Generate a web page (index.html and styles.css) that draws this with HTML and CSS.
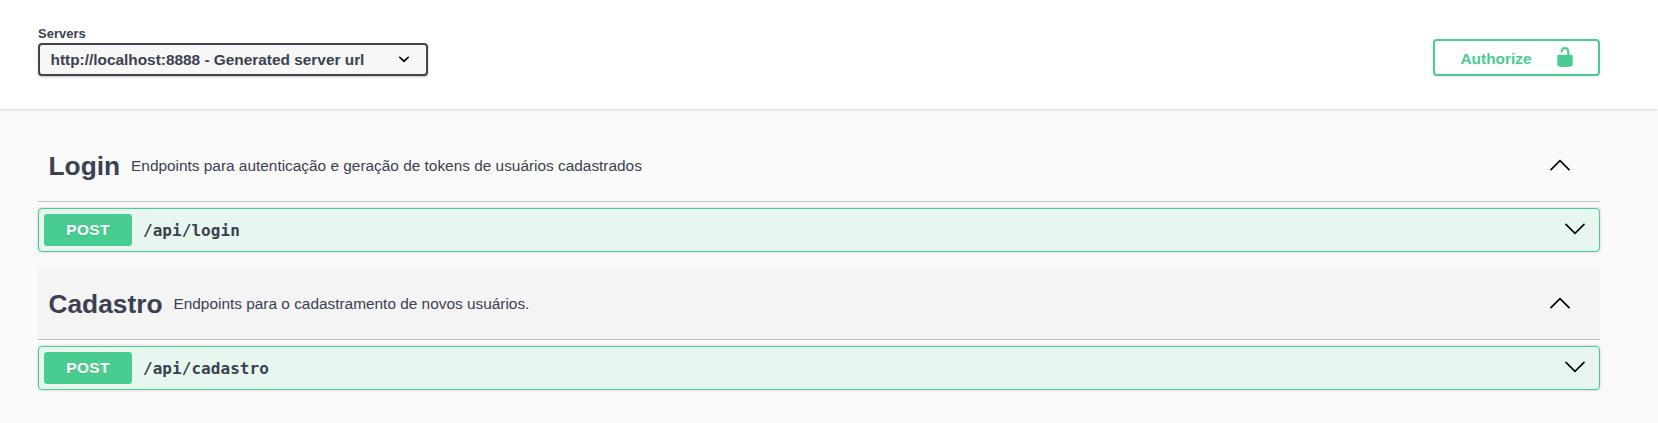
FILE: index.html
```html
<!DOCTYPE html>
<html lang="pt-BR">
<head>
<meta charset="utf-8">
<title>API</title>
<link rel="stylesheet" href="styles.css">
</head>
<body>
<header class="scheme">
  <div class="servers">
    <span class="servers-label">Servers</span>
    <div class="select" role="combobox" tabindex="0">
      <span class="select-value">http://localhost:8888 - Generated server url</span>
      <svg class="select-arrow" width="22" height="22" viewBox="0 0 20 20"><path d="M13.418 7.859a.695.695 0 0 1 .978 0 .68.68 0 0 1 0 .969l-3.908 3.83a.697.697 0 0 1-.979 0l-3.908-3.83a.68.68 0 0 1 0-.969.695.695 0 0 1 .978 0L10 11z"/></svg>
    </div>
  </div>
  <button class="authorize" type="button">
    <span class="authorize-text">Authorize</span>
    <svg class="lock" width="22" height="22" viewBox="0 0 20 20"><path d="M15.8 8H14V5.6C14 2.703 12.665 1 10 1 7.334 1 6 2.703 6 5.6V6h2v-.801C8 3.754 8.797 3 10 3c1.203 0 2 .754 2 2.199V8H4c-.553 0-1 .646-1 1.199V17c0 .549.428 1.139.951 1.307l1.197.387C5.672 18.861 6.55 19 7.1 19h5.8c.549 0 1.428-.139 1.951-.307l1.196-.387c.524-.167.953-.757.953-1.306V9.199C17 8.646 16.352 8 15.8 8z"/></svg>
  </button>
</header>
<main class="tags">
  <section class="tag">
    <div class="tag-head">
      <h3 class="tag-name">Login</h3>
      <p class="tag-desc">Endpoints para autenticação e geração de tokens de usuários cadastrados</p>
      <svg class="arrow" width="22" height="22" viewBox="0 0 20 20"><path d="M1.8 14.2 10 6l8.2 8.2"/></svg>
    </div>
    <div class="op">
      <span class="method">POST</span>
      <span class="path">/api/login</span>
      <svg class="arrow" width="22" height="22" viewBox="0 0 20 20"><path d="M1.8 5.8 10 14l8.2-8.2"/></svg>
    </div>
  </section>
  <section class="tag">
    <div class="tag-head hovered">
      <h3 class="tag-name">Cadastro</h3>
      <p class="tag-desc">Endpoints para o cadastramento de novos usuários.</p>
      <svg class="arrow" width="22" height="22" viewBox="0 0 20 20"><path d="M1.8 14.2 10 6l8.2 8.2"/></svg>
    </div>
    <div class="op">
      <span class="method">POST</span>
      <span class="path">/api/cadastro</span>
      <svg class="arrow" width="22" height="22" viewBox="0 0 20 20"><path d="M1.8 5.8 10 14l8.2-8.2"/></svg>
    </div>
  </section>
</main>
</body>
</html>
```
FILE: styles.css
```css
* { box-sizing: border-box; }
body {
  margin: 0;
  height: 423px;
  overflow: hidden;
  background: #fafafa;
  color: #3b4151;
  font-family: "Liberation Sans", Arial, sans-serif;
}
.scheme {
  display: flex;
  justify-content: space-between;
  align-items: flex-end;
  height: 109px;
  padding: 0 58px 33px 38px;
  background: #fff;
  box-shadow: 0 1px 2px rgba(0, 0, 0, .15);
}
.servers { display: flex; flex-direction: column; }
.servers-label {
  font-size: 13px;
  font-weight: 700;
  line-height: 16px;
  padding-bottom: 1px;
}
.select {
  display: flex;
  align-items: center;
  width: 390px;
  height: 33px;
  padding: 0 11px 0 10.5px;
  border: 2px solid #41444e;
  border-radius: 4px;
  background: #f7f7f7;
  box-shadow: 0 1px 2px rgba(0, 0, 0, .25);
  font-size: 15.4px;
  font-weight: 700;
}
.select-value { white-space: nowrap; }
.select-arrow { margin-left: auto; margin-bottom: 2px; }
.authorize {
  display: flex;
  align-items: center;
  justify-content: space-between;
  width: 167px;
  height: 37px;
  padding: 0 22px 0 25.5px;
  border: 2px solid #49cc90;
  border-radius: 4px;
  background: transparent;
  box-shadow: 0 1px 2px rgba(0, 0, 0, .1);
  color: #49cc90;
  font: 700 15.4px "Liberation Sans", Arial, sans-serif;
}
.authorize-text { padding-top: 2px; }
.lock { fill: #49cc90; margin-bottom: 1px; }
.tags { padding: 22px 58px 0 38px; }
.tag { height: 138px; }
.tag-head {
  display: flex;
  align-items: center;
  height: 71px;
  padding: 0 29px 0 10.5px;
  border-bottom: 1px solid rgba(59, 65, 81, .3);
}
.hovered { background: #f4f4f4; }
.tag-name { margin: 0; font-size: 26.3px; font-weight: 700; }
.tag-desc { margin: 0; padding-left: 11px; font-size: 15.4px; }
.arrow {
  margin-left: auto;
  margin-bottom: 2px;
  fill: none;
  stroke: #000;
  stroke-width: 1.5;
  stroke-linecap: round;
}
.op {
  display: flex;
  align-items: center;
  height: 44px;
  margin-top: 6px;
  padding: 0 13px 0 5px;
  border: 1px solid #49cc90;
  border-radius: 4px;
  background: #e8f6f0;
  box-shadow: 0 0 3px rgba(0, 0, 0, .19);
}
.method {
  width: 88px;
  height: 32px;
  border-radius: 3px;
  background: #49cc90;
  color: #fff;
  font-size: 15.4px;
  font-weight: 700;
  letter-spacing: .4px;
  line-height: 32px;
  text-align: center;
  text-shadow: 0 1px 0 rgba(0, 0, 0, .1);
}
.path {
  padding-left: 11px;
  font: 700 16px "DejaVu Sans Mono", monospace;
  letter-spacing: .05px;
}
```
